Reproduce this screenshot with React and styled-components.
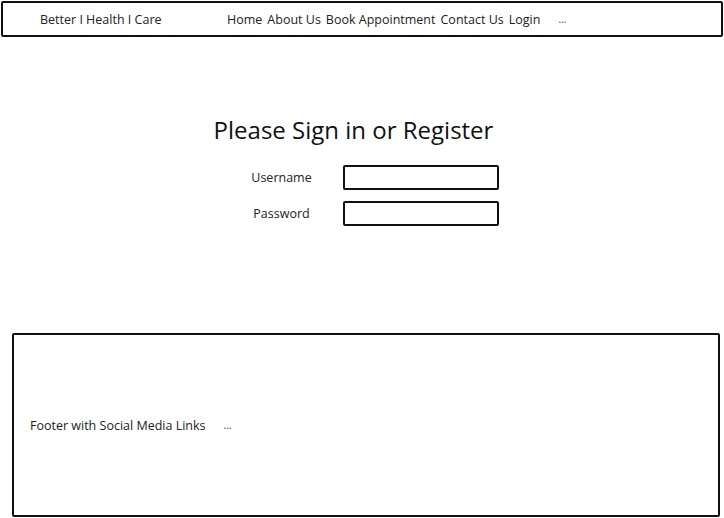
import React from "react"
import styled, { createGlobalStyle } from "styled-components"

const GlobalStyle = createGlobalStyle`
  html, body {
    margin: 0;
    padding: 0;
    background: #fff;
  }
  body {
    font-family: "Open Sans", "Liberation Sans", sans-serif;
    color: #222;
  }
`

const navItems = ["Home", "About Us", "Book Appointment", "Contact Us", "Login"]

const App = () => (
  <>
    <GlobalStyle />
    <Page>
      <Header>
        <Brand>Better I Health I Care</Brand>
        <Nav>
          {navItems.map((item) => (
            <NavItem key={item}>{item}</NavItem>
          ))}
        </Nav>
        <More>...</More>
      </Header>

      <Main>
        <Title>Please Sign in or Register</Title>
        <Form>
          <Label>Username</Label>
          <Field />
          <Label>Password</Label>
          <Field type="password" />
        </Form>
      </Main>

      <Footer>
        <FooterText>Footer with Social Media Links</FooterText>
        <More>...</More>
      </Footer>
    </Page>
  </>
)

export default App

const Page = styled.div`
  width: 724px;
  height: 518px;
  display: flex;
  flex-direction: column;
  box-sizing: border-box;
  padding-top: 1px;

  & > * {
    flex-shrink: 0;
  }
`

const Header = styled.header`
  margin-left: 1px;
  width: 722px;
  height: 36px;
  box-sizing: border-box;
  border: 2px solid #111;
  border-radius: 2px;
  display: flex;
  align-items: center;
  padding-left: 37px;
  font-size: 12.5px;
`

const Brand = styled.div`
  width: 187px;
`

const Nav = styled.nav`
  display: flex;
  gap: 5px;
`

const NavItem = styled.span`
  white-space: nowrap;
`

const More = styled.span`
  margin-left: 18px;
  font-size: 10px;
  color: #333;
`

const Main = styled.main`
  display: flex;
  flex-direction: column;
  align-items: center;
  padding-top: 77px;
  height: 296px;
  box-sizing: border-box;
`

const Title = styled.h1`
  margin: 0 17px 19px 0;
  font-weight: 400;
  font-size: 24px;
  line-height: 32px;
  color: #111;
`

const Form = styled.div`
  display: grid;
  grid-template-columns: 123px 156px;
  row-gap: 11px;
  align-items: center;
  margin-right: 5px;
`

const Label = styled.label`
  font-size: 12.5px;
  text-align: center;
  color: #222;
`

const Field = styled.input`
  width: 156px;
  height: 25px;
  box-sizing: border-box;
  border: 2px solid #111;
  border-radius: 2px;
  background: #fff;
  outline: none;
`

const Footer = styled.footer`
  margin-left: 12px;
  width: 708px;
  height: 184px;
  box-sizing: border-box;
  border: 2px solid #111;
  border-radius: 2px;
  display: flex;
  align-items: center;
  padding-left: 16px;
  font-size: 12.5px;
`

const FooterText = styled.span`
  white-space: nowrap;
`
